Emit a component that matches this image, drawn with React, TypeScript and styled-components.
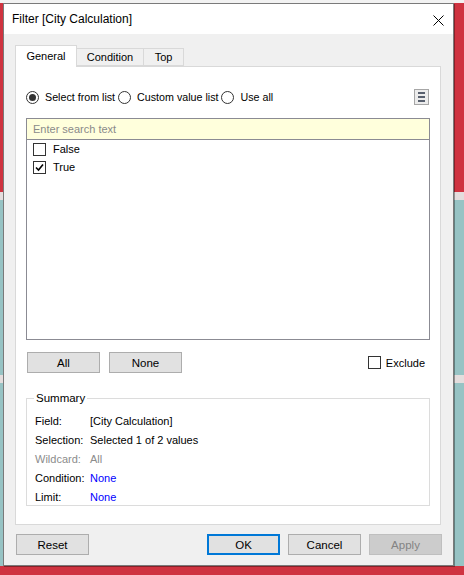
import React from "react";
import styled, { createGlobalStyle } from "styled-components";

const Global = createGlobalStyle`
  html, body { margin: 0; padding: 0; }
  body {
    width: 464px;
    height: 575px;
    overflow: hidden;
    font-family: "Liberation Sans", Arial, sans-serif;
    font-size: 11px;
    color: #000;
    background: linear-gradient(
      to bottom,
      #f2f2f2 0, #f2f2f2 3px,
      #cf3340 3px, #cf3340 192px,
      #e4dddd 192px, #e4dddd 200px,
      #97c3c4 200px, #97c3c4 375px,
      #e4dddd 375px, #e4dddd 383px,
      #97c3c4 383px, #97c3c4 566px,
      #cf3340 566px
    );
  }
`;

const Dialog = styled.div`
  width: 451px;
  height: 563px;
  box-sizing: border-box;
  margin: 3px 0 0 3px;
  border: 1px solid #7a7a7a;
  background: #f0f0f0;
  display: flex;
  flex-direction: column;
  box-shadow: 1px 1px 0 rgba(0, 0, 0, 0.35);
`;

const TitleBar = styled.div`
  height: 30px;
  background: #fff;
  display: flex;
  align-items: center;
  justify-content: space-between;
  padding: 0 9px 0 8px;
  font-size: 12px;
`;

const CloseButton = styled.span`
  display: flex;
  align-items: center;
  justify-content: center;
  width: 12px;
  height: 12px;
  margin-top: 2px;
`;

const Body = styled.div`
  flex: 1;
  display: flex;
  flex-direction: column;
  padding: 11px 12px 0 11px;
`;

const TabRow = styled.div`
  display: flex;
  align-items: flex-end;
  height: 21px;
  position: relative;
  z-index: 1;
`;

const Tab = styled.div<{ $active?: boolean; $w: number }>`
  box-sizing: border-box;
  width: ${(p) => p.$w}px;
  height: ${(p) => (p.$active ? 22 : 18)}px;
  margin-bottom: ${(p) => (p.$active ? -1 : 0)}px;
  margin-left: -1px;
  &:first-child { margin-left: 0; }
  display: flex;
  align-items: center;
  justify-content: center;
  padding-bottom: ${(p) => (p.$active ? 2 : 0)}px;
  border: 1px solid #d9d9d9;
  border-bottom: ${(p) => (p.$active ? "none" : "1px solid #d9d9d9")};
  background: ${(p) => (p.$active ? "#fff" : "#f0f0f0")};
  position: relative;
  z-index: ${(p) => (p.$active ? 2 : 1)};
`;

const Panel = styled.div`
  box-sizing: border-box;
  height: 459px;
  border: 1px solid #d9d9d9;
  background: #fff;
  padding: 22px 10px 0 10px;
  display: flex;
  flex-direction: column;
`;

const RadioRow = styled.div`
  display: flex;
  align-items: center;
  height: 16px;
  font-size: 10.7px;
`;

const RadioItem = styled.label`
  display: flex;
  align-items: center;
  margin-right: 3px;
`;

const RadioCircle = styled.span<{ $on?: boolean }>`
  box-sizing: border-box;
  width: 13px;
  height: 13px;
  border: 1px solid #333;
  border-radius: 50%;
  background: #fff;
  margin-right: 6px;
  display: flex;
  align-items: center;
  justify-content: center;
  &::after {
    content: "";
    display: ${(p) => (p.$on ? "block" : "none")};
    width: 7px;
    height: 7px;
    border-radius: 50%;
    background: #333;
  }
`;

const MenuButton = styled.span`
  margin-left: auto;
  margin-right: 1px;
  box-sizing: border-box;
  width: 15px;
  height: 16px;
  border: 1px solid #a6a6a6;
  background: #ececec;
  display: flex;
  flex-direction: column;
  align-items: center;
  justify-content: center;
  gap: 2px;
  & > i {
    display: block;
    width: 7px;
    height: 2px;
    background: #58606e;
  }
`;

const ListBox = styled.div`
  box-sizing: border-box;
  height: 222px;
  margin-top: 13px;
  border: 1px solid #8b8b93;
  display: flex;
  flex-direction: column;
`;

const Search = styled.input`
  box-sizing: border-box;
  height: 21px;
  border: none;
  border-bottom: 1px solid #8b8b93;
  background: #ffffdc;
  padding: 0 0 0 6px;
  font: inherit;
  outline: none;
  &::placeholder { color: #8a8a8a; }
`;

const ListItem = styled.div`
  height: 18px;
  display: flex;
  align-items: center;
  padding-left: 6px;
`;

const Check = styled.span<{ $on?: boolean }>`
  box-sizing: border-box;
  width: 13px;
  height: 13px;
  border: 1px solid #333;
  background: #fff;
  margin-right: 7px;
  display: flex;
  align-items: center;
  justify-content: center;
`;

const ButtonRow = styled.div`
  display: flex;
  align-items: center;
  margin-top: 12px;
  padding-left: 1px;
  gap: 9px;
`;

const Button = styled.button<{ $primary?: boolean; $disabled?: boolean }>`
  box-sizing: border-box;
  width: 73px;
  height: 21px;
  padding: 0;
  font: inherit;
  font-size: 11.5px;
  color: ${(p) => (p.$disabled ? "#838383" : "#000")};
  background: ${(p) => (p.$disabled ? "#cccccc" : "#e1e1e1")};
  border: ${(p) =>
    p.$primary ? "2px solid #0078d7" : p.$disabled ? "1px solid #bfbfbf" : "1px solid #adadad"};
`;

const ExcludeLabel = styled.label`
  margin-left: auto;
  margin-right: 5px;
  display: flex;
  align-items: center;
  & > span { margin-right: 5px; }
`;

const Summary = styled.fieldset`
  box-sizing: border-box;
  height: 114px;
  margin: 19px 0 0 0;
  padding: 7px 8px 0 8px;
  border: 1px solid #dcdcdc;
  min-width: 0;
`;

const Legend = styled.legend`
  padding: 0 2px;
  margin-left: -1px;
  font-size: 11.5px;
`;

const SummaryGrid = styled.div`
  display: grid;
  grid-template-columns: 55px 1fr;
  grid-auto-rows: 19px;
  align-items: center;
`;

const Label = styled.span<{ $muted?: boolean }>`
  color: ${(p) => (p.$muted ? "#8c8c8c" : "#000")};
`;

const Value = styled.span<{ $tone?: "muted" | "link" }>`
  color: ${(p) => (p.$tone === "muted" ? "#8c8c8c" : p.$tone === "link" ? "#0000ff" : "#000")};
`;

const Footer = styled.div`
  display: flex;
  align-items: center;
  margin-top: 9px;
  padding-left: 1px;
`;

const FooterRight = styled.div`
  margin-left: auto;
  display: flex;
  gap: 8px;
  margin-right: -1px;
`;

const CheckMark = () => (
  <svg width="11" height="11" viewBox="0 0 11 11">
    <path d="M2 5.5 L4.5 8 L9 2.5" fill="none" stroke="#000" strokeWidth="1.6" />
  </svg>
);

export default function App() {
  return (
    <>
      <Global />
      <Dialog>
        <TitleBar>
          <span>Filter [City Calculation]</span>
          <CloseButton>
            <svg width="11" height="11" viewBox="0 0 11 11">
              <path d="M0.5 0.5 L10.5 10.5 M10.5 0.5 L0.5 10.5" stroke="#000" strokeWidth="1" />
            </svg>
          </CloseButton>
        </TitleBar>
        <Body>
          <TabRow>
            <Tab $active $w={62}>General</Tab>
            <Tab $w={68}>Condition</Tab>
            <Tab $w={41}>Top</Tab>
          </TabRow>
          <Panel>
            <RadioRow>
              <RadioItem>
                <RadioCircle $on />
                Select from list
              </RadioItem>
              <RadioItem>
                <RadioCircle />
                Custom value list
              </RadioItem>
              <RadioItem>
                <RadioCircle />
                Use all
              </RadioItem>
              <MenuButton>
                <i />
                <i />
                <i />
              </MenuButton>
            </RadioRow>
            <ListBox>
              <Search placeholder="Enter search text" readOnly />
              <ListItem>
                <Check />
                False
              </ListItem>
              <ListItem>
                <Check $on>
                  <CheckMark />
                </Check>
                True
              </ListItem>
            </ListBox>
            <ButtonRow>
              <Button>All</Button>
              <Button>None</Button>
              <ExcludeLabel>
                <Check />
                Exclude
              </ExcludeLabel>
            </ButtonRow>
            <Summary>
              <Legend>Summary</Legend>
              <SummaryGrid>
                <Label>Field:</Label>
                <Value>[City Calculation]</Value>
                <Label>Selection:</Label>
                <Value>Selected 1 of 2 values</Value>
                <Label $muted>Wildcard:</Label>
                <Value $tone="muted">All</Value>
                <Label>Condition:</Label>
                <Value $tone="link">None</Value>
                <Label>Limit:</Label>
                <Value $tone="link">None</Value>
              </SummaryGrid>
            </Summary>
          </Panel>
          <Footer>
            <Button>Reset</Button>
            <FooterRight>
              <Button $primary>OK</Button>
              <Button>Cancel</Button>
              <Button $disabled>Apply</Button>
            </FooterRight>
          </Footer>
        </Body>
      </Dialog>
    </>
  );
}
